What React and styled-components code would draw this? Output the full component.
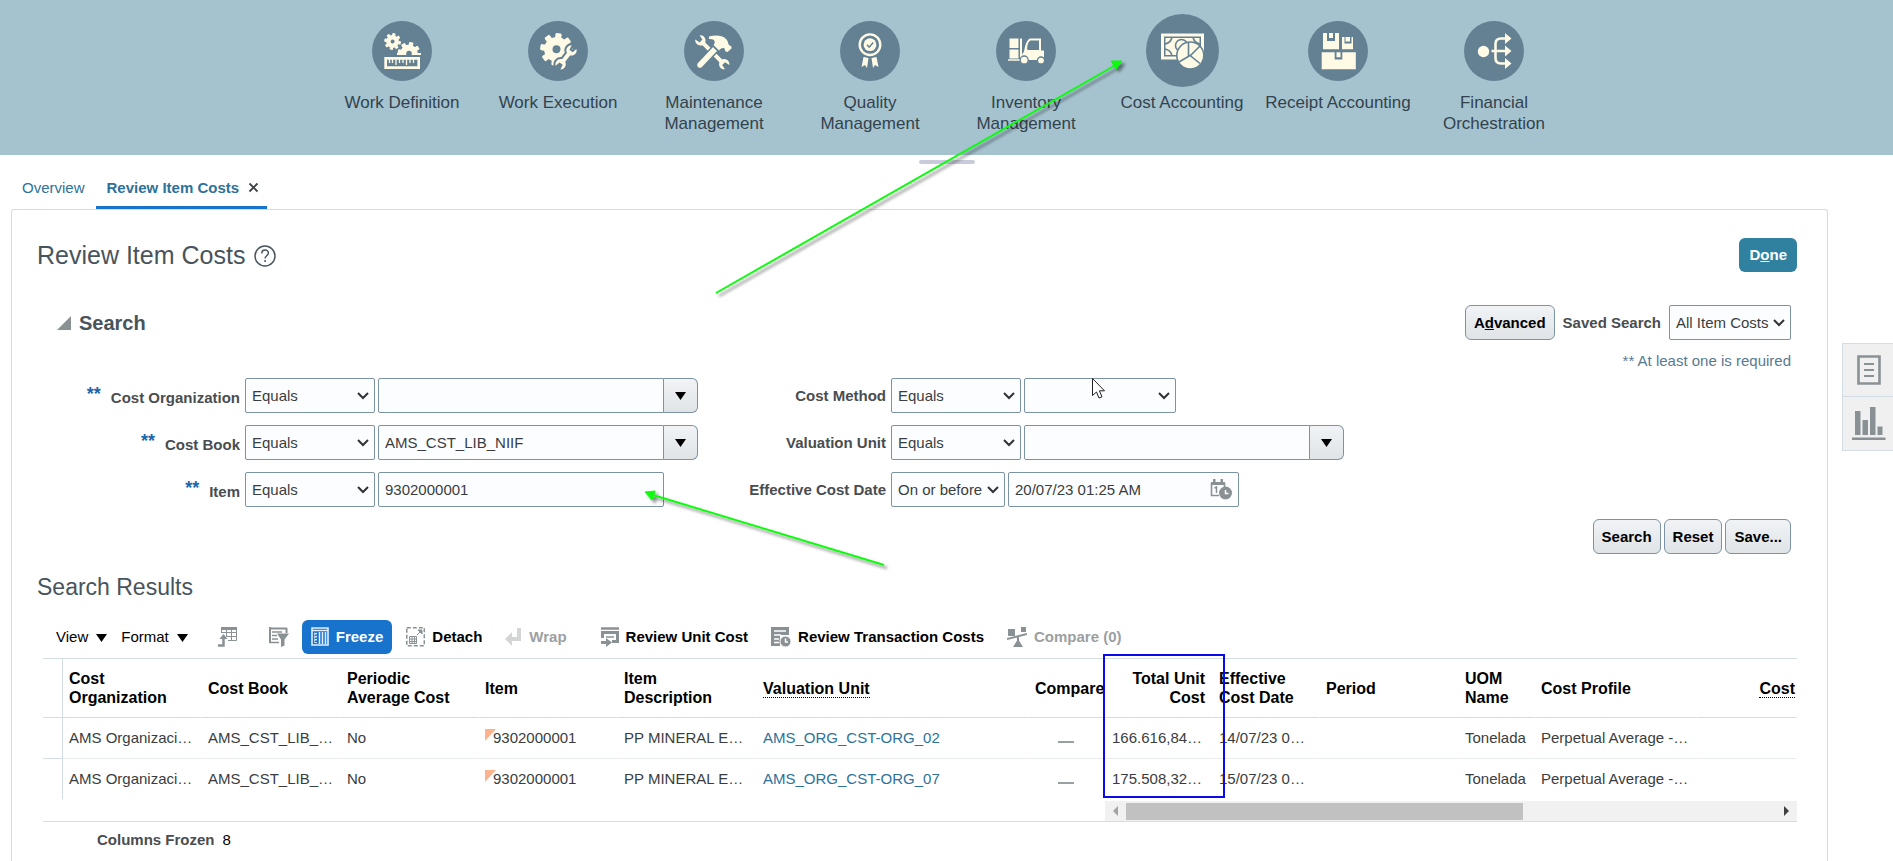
import React from "react"
import styled, { createGlobalStyle, css } from "styled-components"

const colors = {
  header: "#a5c3cf",
  disc: "#638193",
  cream: "#fefae6",
  link: "#2d7299",
  blue: "#1873cc",
  line: "#d3dde5",
  field: "#7b93a3",
  text: "#3a3d40",
  title: "#48545b",
  label: "#4a4d50",
  icon: "#8a9195",
}

const GlobalStyle = createGlobalStyle`
  *, *::before, *::after {
    box-sizing: border-box;
  }
  body {
    margin: 0;
    background: #fff;
    color: ${colors.text};
    font-family: "Liberation Sans", Arial, sans-serif;
    font-size: 15px;
    line-height: 18px;
  }
  button, input, select {
    font: inherit;
    margin: 0;
  }
`

const Page = styled.div`
  position: relative;
  display: flex;
  flex-direction: column;
  min-height: 100vh;
  overflow: hidden;
`
const Springboard = styled.nav`
  display: flex;
  justify-content: center;
  min-height: 155px;
  padding: 14px 0 0 3px;
  background: ${colors.header};
`
const AppLink = styled.a`
  display: flex;
  flex-direction: column;
  align-items: center;
  width: 156px;
  color: #33424d;
  font-size: 17px;
  line-height: 21px;
  text-align: center;
  text-decoration: none;
`
const AppIcon = styled.span`
  display: flex;
  align-items: center;
  justify-content: center;
  height: 73px;
  margin-bottom: 5px;
  svg {
    display: block;
    border-radius: 50%;
    background: ${colors.disc};
  }
  svg svg {
    border-radius: 0;
    background: none;
  }
`
const AppName = styled.span`
  width: ${props => (props.$wrap ? "112px" : "auto")};
  white-space: ${props => (props.$wrap ? "normal" : "nowrap")};
`
const Handle = styled.div`
  width: 56px;
  height: 4px;
  margin: 5px auto 0;
  border-radius: 2px;
  background: #c9cbda;
`
const Body = styled.div`
  display: flex;
  flex: 1;
  gap: 14px;
  padding-left: 11px;
`
const Main = styled.main`
  display: flex;
  flex: 1;
  flex-direction: column;
  min-width: 0;
`
const Tabs = styled.div`
  display: flex;
  height: 45px;
`
const Tab = styled.div`
  display: flex;
  align-items: center;
  gap: 9px;
  padding: ${props => (props.$active ? "5px 8px 0 11px" : "5px 11px 0 11px")};
  border-bottom: 3px solid ${props => (props.$active ? colors.blue : "transparent")};
  font-weight: ${props => (props.$active ? "bold" : "normal")};
  a {
    color: ${colors.link};
    text-decoration: none;
  }
`
const CloseButton = styled.button`
  display: flex;
  padding: 0;
  border: none;
  background: none;
`
const Panel = styled.section`
  flex: 1;
  padding: 28px 30px 0 25px;
  border: 1px solid ${colors.line};
  border-bottom: none;
  border-radius: 3px 3px 0 0;
`
const TitleRow = styled.div`
  display: flex;
  align-items: center;
  height: 34px;
  margin-bottom: 33px;
`
const Title = styled.h1`
  margin: 0 8px 0 0;
  color: ${colors.title};
  font-size: 25px;
  font-weight: normal;
  line-height: 30px;
`
const HelpButton = styled(CloseButton)`
  margin-right: auto;
`
const Button = styled.button`
  height: 35px;
  padding: 0 8px;
  border: 1px solid ${colors.field};
  border-radius: 6px;
  background: linear-gradient(#f1f3f5, #e0e4e7);
  color: #000;
  font-weight: bold;
  ${props =>
    props.$primary &&
    css`
      height: 34px;
      padding: 0 10px;
      border: none;
      background: #2f819f;
      color: #fff;
    `}
`
const SearchHeader = styled.div`
  display: flex;
  align-items: center;
  gap: 8px;
  padding: 0 6px 0 20px;
`
const Disclosure = styled.button`
  display: flex;
  align-items: center;
  gap: 8px;
  margin-right: auto;
  padding: 0;
  border: none;
  background: none;
  color: ${colors.title};
  font-size: 20px;
  font-weight: bold;
`
const Note = styled.p`
  margin: 12px 6px 8px 0;
  color: #587a91;
  text-align: right;
`
const Fields = styled.div`
  display: flex;
`
const FieldColumn = styled.div`
  display: flex;
  flex-direction: column;
  gap: 12px;
  width: ${props => props.$width};
`
const Field = styled.div`
  display: flex;
  align-items: center;
  gap: 3px;
  height: 35px;
`
const Label = styled.label`
  width: ${props => props.$width || "auto"};
  margin-right: ${props => (props.$width ? "2px" : "0")};
  color: ${colors.label};
  font-weight: bold;
  text-align: right;
  white-space: nowrap;
`
const Stars = styled.span`
  margin-right: 10px;
  color: #1b66ad;
  font-size: 18px;
  vertical-align: 3px;
`
const control = css`
  height: 35px;
  border: 1px solid ${colors.field};
  border-radius: 2px;
  background: #fcfdff;
  color: ${colors.text};
`
const SelectBox = styled.span`
  position: relative;
  display: flex;
  width: ${props => props.$width};
  svg {
    position: absolute;
    top: 14px;
    right: 6px;
    pointer-events: none;
  }
`
const NativeSelect = styled.select`
  ${control}
  width: 100%;
  padding: 0 6px;
  appearance: none;
`
const Input = styled.input`
  ${control}
  width: 286px;
  padding: 0 6px;
`
const Combo = styled.div`
  display: flex;
  ${Input} {
    border-radius: 2px 0 0 2px;
  }
`
const DropButton = styled.button`
  display: flex;
  align-items: center;
  justify-content: center;
  width: 34px;
  height: 35px;
  padding: 0;
  border: 1px solid ${colors.field};
  border-left: none;
  border-radius: 0 6px 6px 0;
  background: linear-gradient(#f1f3f5, #e0e4e7);
`
const DateBox = styled.div`
  ${control}
  display: flex;
  align-items: center;
  width: 231px;
  padding-right: 6px;
  ${Input} {
    flex: 1;
    min-width: 0;
    height: 33px;
    border: none;
  }
`
const Actions = styled.div`
  display: flex;
  justify-content: flex-end;
  gap: 3px;
  margin: 12px 6px 19px 0;
`
const Subtitle = styled.h2`
  margin: 0 0 19px;
  color: ${colors.title};
  font-size: 23px;
  font-weight: normal;
  line-height: 28px;
`
const Toolbar = styled.div`
  display: flex;
  gap: 11px;
  padding-left: 19px;
`
const ToolGroup = styled.div`
  display: flex;
  gap: ${props => props.$gap || "5px"};
  padding-left: ${props => props.$lead || "0"};
`
const MenuButton = styled.button`
  display: flex;
  align-items: center;
  gap: 8px;
  padding: 0;
  border: none;
  background: none;
  color: #000;
`
const ToolButton = styled.button`
  display: flex;
  align-items: center;
  gap: 7px;
  height: 34px;
  padding: ${props => (props.$iconOnly ? "0 8px 0 19px" : "0 9px")};
  border: none;
  border-radius: 6px;
  background: ${props => (props.$active ? colors.blue : "none")};
  color: ${props => (props.$active ? "#fff" : "#000")};
  font-weight: bold;
  white-space: nowrap;
  &:disabled {
    color: #9c9fa1;
  }
`
const Results = styled.div`
  position: relative;
  margin: 4px 0 0 6px;
  border-bottom: 1px solid ${colors.line};
`
const Table = styled.table`
  width: 100%;
  border-top: 1px solid ${colors.line};
  border-spacing: 0;
  table-layout: fixed;
`
const HeadCell = styled.th`
  height: 59px;
  padding: 0 ${props => (props.$edge ? "1px" : "7px")} 0 6px;
  border-right: 1px solid ${props => (props.$rule ? colors.line : "#fff")};
  border-bottom: 1px solid ${colors.line};
  overflow: hidden;
  color: #000;
  font-size: 16px;
  line-height: 19px;
  text-align: ${props => props.$align || "left"};
  abbr {
    border-bottom: 1px dotted #000;
    text-decoration: none;
  }
`
const Cell = styled.td`
  height: 41px;
  padding: 0 0 0 6px;
  border-right: 1px solid ${props => (props.$rule ? colors.line : "#fff")};
  border-bottom: 1px solid ${props => (props.$rule ? colors.line : "#e9ecee")};
  overflow: hidden;
  text-align: ${props => props.$align || "left"};
  white-space: nowrap;
  a {
    color: ${colors.link};
    text-decoration: none;
  }
  tr:last-child > & {
    border-bottom-color: transparent;
  }
`
const ItemValue = styled.span`
  display: flex;
  svg {
    margin-right: -3px;
  }
`
const Dash = styled.span`
  display: inline-block;
  width: 16px;
  height: 2px;
  margin-right: 8px;
  background: #9a9fa2;
`
const ScrollRow = styled.div`
  display: flex;
  padding-top: 1px;
`
const FrozenSpace = styled.div`
  width: 1062px;
`
const ScrollBar = styled.div`
  display: flex;
  flex: 1;
  align-items: center;
  height: 20px;
  background: #f1f1f1;
`
const ScrollButton = styled.button`
  display: flex;
  align-items: center;
  justify-content: center;
  width: 21px;
  height: 20px;
  padding: 0;
  border: none;
  background: none;
`
const Track = styled.div`
  flex: 1;
`
const Thumb = styled.div`
  width: 61%;
  height: 17px;
  background: #c1c1c1;
`
const Frozen = styled.p`
  display: flex;
  gap: 8px;
  margin: 9px 0 0 60px;
  color: #000;
  b {
    color: ${colors.label};
  }
`
const SideRail = styled.aside`
  width: 51px;
  padding-top: 179px;
`
const RailButton = styled.button`
  display: flex;
  align-items: center;
  justify-content: center;
  width: 51px;
  height: 54px;
  padding: 0 0 0 2px;
  border: 1px solid ${colors.line};
  border-right: none;
  background: #f0f0f0;
  & + & {
    border-top: none;
  }
`
const Highlight = styled.div`
  position: absolute;
  top: -4px;
  left: 1060px;
  width: 122px;
  height: 144px;
  border: 2px solid #0a0af0;
`
const Annotations = styled.svg`
  position: absolute;
  top: 0;
  left: 0;
  pointer-events: none;
`

const Gear = ({ x, y, r, hole, teeth = 8, turn = 0 }) => {
  const body = r * 0.76
  return (
    <g transform={`translate(${x} ${y}) rotate(${turn})`}>
      <circle r={(body + hole) / 2} fill="none" stroke={colors.cream} strokeWidth={body - hole} />
      {Array.from({ length: teeth }, (_, i) => (
        <rect
          key={i}
          x={-r * 0.19}
          y={-r}
          width={r * 0.38}
          height={r * 0.35}
          rx={r * 0.08}
          fill={colors.cream}
          transform={`rotate(${(i * 360) / teeth})`}
        />
      ))}
    </g>
  )
}

const WrenchShape = ({ length }) => (
  <path
    d={`M-2 4 L-2 ${length - 4} C-6 ${length - 2} -6 ${length + 3} -3 ${length + 5} L-2 ${length} L2 ${length} L3 ${length + 5}
      C6 ${length + 3} 6 ${length - 2} 2 ${length - 4} L2 4 C6 2 6 -3 3 -5 L2 0 L-2 0 L-3 -5 C-6 -3 -6 2 -2 4Z`}
  />
)

const WorkDefinitionIcon = () => (
  <svg width="60" height="60" viewBox="0 0 60 60" fill={colors.cream}>
    <Gear x={20.6} y={20.5} r={8.4} hole={2} turn={10} />
    <svg x="24" y="18" width="25" height="16" viewBox="24 18 25 16">
      <Gear x={37} y={32.5} r={11.4} hole={2.8} turn={12} />
      <path d="M25 32h6v2h-6zM43 32h6v2h-6z" />
    </svg>
    <path d="M12.3 36H48v12H12.3zM15 38.7v6.6h30.4v-6.6z" fillRule="evenodd" />
    <path d="M17.5 38v4M20.5 38v4M24 38v6M27.500 38v4M31 38v4M34.500 38v6M38 38v4M41.500 38v4" stroke={colors.cream} strokeWidth="1.3" />
  </svg>
)
const WorkExecutionIcon = () => (
  <svg width="60" height="60" viewBox="0 0 60 60" fill={colors.cream}>
    <Gear x={28.5} y={28.3} r={16.3} hole={4} turn={8} />
    <g transform="translate(43 30) rotate(38)" stroke={colors.disc} strokeWidth="4" strokeLinejoin="round">
      <WrenchShape length={16} />
    </g>
    <g transform="translate(43 30) rotate(38)">
      <WrenchShape length={16} />
    </g>
  </svg>
)
const MaintenanceIcon = () => (
  <svg width="60" height="60" viewBox="0 0 60 60" fill={colors.cream}>
    <g transform="translate(17 20) rotate(-45)">
      <WrenchShape length={32} />
    </g>
    <path d="M13 42l16-17 5 5-16 17q-2.500 1.500-4.500-.5t-.5-4.500z" stroke={colors.disc} strokeWidth="1.500" />
    <path d="M25 15.500c6-1.500 13-1.500 17 2.500 2.500 2.500 2 5 3 6l2.500 1.500v2l-4 3.500-2-.5-1-3c-2-1-4 0-5.500 2l-5.500-5.500c2.500-3 1.500-6.500-4.500-6z" />
  </svg>
)
const QualityIcon = () => (
  <svg width="60" height="60" viewBox="0 0 60 60" fill={colors.cream}>
    <circle cx="30" cy="23.700" r="10.300" fill="none" stroke={colors.cream} strokeWidth="2.400" />
    <circle cx="30" cy="23.700" r="6.400" />
    <path d="M27 23.800l2.200 2.400 4-4.600" fill="none" stroke={colors.disc} strokeWidth="1.500" />
    <path d="M23.500 36l5 1-1.500 10-2-3-3.500 2zM36.500 36l-5 1 1.500 10 2-3 3.500 2z" />
  </svg>
)
const InventoryIcon = () => (
  <svg width="60" height="60" viewBox="0 0 60 60" fill={colors.cream}>
    <path d="M13.500 17.500h9v9.500h-9zM13.500 28.500h9v9h-9zM12 38.300h13v1.500H12zM24 17.500h2v21h-2z" />
    <path d="M27 32c2-1.500 1-8 5-13 1-1.200 2-1.500 3-1.500h10v12h3v9.500H26v-5zM34.500 19.500c-3 1.500-3 6-3.500 9l2 .5h10v-9.500z" fillRule="evenodd" />
    <circle cx="28.200" cy="39" r="4" stroke={colors.disc} strokeWidth="1.300" />
    <circle cx="45" cy="39.500" r="3.500" stroke={colors.disc} strokeWidth="1.300" />
  </svg>
)
const CostIcon = () => (
  <svg width="73" height="73" viewBox="0 0 73 73" fill={colors.cream}>
    <path d="M15 19.500h43v26H15zM18 22.500v20h37v-20z" fillRule="evenodd" />
    <path d="M19.500 24h34v17h-34z" />
    <g fill="none" stroke={colors.disc}>
      <path d="M19 30q6-1 7-7M19 35q6 1 7 7M54 30q-6-1-7-7" strokeWidth="1.600" />
      <circle cx="35.500" cy="31.500" r="6" strokeWidth="1.600" />
    </g>
    <circle cx="44.300" cy="41.500" r="13.500" stroke={colors.disc} strokeWidth="1.600" />
    <path d="M42.500 28v14M44 42l10-10M33 48l11-6.500 10 8" fill="none" stroke={colors.disc} strokeWidth="1.600" />
  </svg>
)
const ReceiptIcon = () => (
  <svg width="60" height="60" viewBox="0 0 60 60" fill={colors.cream}>
    <path d="M15 12h4v8h8v-8h4v16.300H15zM21 12h4v5h-4zM34 16h2.500v6.500h7V16H45v12.300H34zM37.500 16h4.500v4.500h-4.500zM13.700 31.300h13v7.200h7.600v-7.200h13.500v17H13.700zM28.500 31.300h4v5h-4z" />
  </svg>
)
const FinancialIcon = () => (
  <svg width="60" height="60" viewBox="0 0 60 60" fill={colors.cream}>
    <circle cx="19.500" cy="30.500" r="5.700" />
    <path d="M27.500 30H43M43 17.500h-6q-5.500 0-5.500 5.500v14q0 5.500 5.500 5.500h6" fill="none" stroke={colors.cream} strokeWidth="2.600" />
    <path d="M41 12l6.500 5.500-6.500 5.500zM41 24.500l6.500 5.500-6.500 5.500zM41 37l6.500 5.500-6.500 5.500z" />
  </svg>
)

const Caret = () => (
  <svg width="11" height="9" viewBox="0 0 11 9" aria-hidden="true">
    <path d="M0 1h11L5.500 9z" fill="#000" />
  </svg>
)
const ToolIcon = ({ width = 19, children }) => (
  <svg width={width} height="20" viewBox={`0 0 ${width} 20`} fill="none" stroke={colors.icon} strokeWidth="1" aria-hidden="true">
    {children}
  </svg>
)
const ExportIcon = () => (
  <ToolIcon>
    <path d="M3.500 6V.5h15v13H10M3.500 5.500h15M8 9.500h10.500M8.500 1v9M13.500 1v13" />
    <path d="M3 0h16v3H3z" fill={colors.icon} stroke="none" />
    <path d="M0 18.500h5.500V11" strokeWidth="2.500" />
    <path d="M1.500 12l4-5 4 5z" fill={colors.icon} stroke="none" />
  </ToolIcon>
)
const FilterIcon = () => (
  <ToolIcon width={20}>
    <path d="M0 1.500h18M1 0v16M17.500 1v5" strokeWidth="2" />
    <path d="M3 5h10M3 8.500h5M3 12h6M0 15.500h10" strokeWidth="1.500" />
    <path d="M8 6.500h12l-4.500 6v6L12 20v-7.500z" fill={colors.icon} stroke="none" />
  </ToolIcon>
)
const FreezeIcon = () => (
  <ToolIcon width={18}>
    <g stroke="#e4eefb">
      <path d="M1 1h16v17H1z" strokeWidth="1.600" />
      <path d="M1 3.500h16" strokeWidth="1.500" />
      <path d="M8.500 5v12M11.500 5v12M14.500 5v12" strokeWidth="1.500" />
      <path d="M3 6l3 1M3 9l3 1M3 12l3 1M3 15l3 1M3 8l3-2M3 11l3-2M3 14l3-2" />
    </g>
  </ToolIcon>
)
const DetachIcon = () => (
  <ToolIcon>
    <path d="M.8.8h17.500v18H.8z" strokeWidth="1.500" strokeDasharray="4 2" />
    <path d="M3.500 9.500h7v7h-7zM3.500 12h7M3.500 14.500h7M6 9.500v7M8.500 9.500v7M11 8l4-4" />
    <path d="M12 3h4v4z" fill={colors.icon} />
  </ToolIcon>
)
const WrapIcon = () => (
  <ToolIcon width={17}>
    <path d="M14 1v11H6" stroke="#d3d5d7" strokeWidth="4" />
    <path d="M0 12l7-7v14z" fill="#d3d5d7" stroke="none" />
  </ToolIcon>
)
const UnitCostIcon = () => (
  <ToolIcon width={18}>
    <path d="M0 1.500h18" strokeWidth="2.500" />
    <path d="M1.500 11V5.500h15v9H11" strokeWidth="3" />
    <path d="M5 10h8" strokeWidth="1.500" />
    <path d="M0 15.500h6" strokeWidth="3" />
    <path d="M5 11l6 4.500-6 4.500z" fill={colors.icon} stroke="none" />
  </ToolIcon>
)
const TransactionIcon = () => (
  <ToolIcon width={20}>
    <path d="M0 0h18v8H9v11H0z" fill={colors.icon} stroke="none" />
    <path d="M3 4h12M3 8h7M3 12h5M3 15.500h5" stroke="#fff" strokeWidth="1.500" />
    <circle cx="14.500" cy="14.500" r="5.500" fill={colors.icon} stroke="#fff" />
    <path d="M14.500 11.500v3.500H17" stroke="#fff" strokeWidth="1.500" />
  </ToolIcon>
)
const CompareIcon = () => (
  <ToolIcon width={20}>
    <path d="M1 2h7v7H1zM14 0h5v5h-5zM11 12l5 8H6z" fill={colors.icon} stroke="none" />
    <path d="M0 12l20-5M11 9v6" strokeWidth="2" />
  </ToolIcon>
)
const CalendarIcon = () => (
  <svg width="22" height="21" viewBox="0 0 22 21" fill="none" aria-hidden="true">
    <path d="M1.500 4v12.500H9M14.500 8V4" stroke={colors.icon} strokeWidth="1.600" />
    <path d="M1 3h14v3H1zM3 0h2.500v3H3zM10.500 0H13v3h-2.500z" fill={colors.icon} />
    <path d="M4.500 9l2-1v6" stroke={colors.icon} strokeWidth="1.500" />
    <circle cx="15.500" cy="14" r="6.500" fill={colors.icon} />
    <path d="M15.500 11v3.500h3" stroke="#fff" strokeWidth="1.500" />
  </svg>
)

const apps = [
  { name: "Work Definition", Icon: WorkDefinitionIcon },
  { name: "Work Execution", Icon: WorkExecutionIcon },
  { name: "Maintenance Management", Icon: MaintenanceIcon, wrap: true },
  { name: "Quality Management", Icon: QualityIcon, wrap: true },
  { name: "Inventory Management", Icon: InventoryIcon, wrap: true },
  { name: "Cost Accounting", Icon: CostIcon },
  { name: "Receipt Accounting", Icon: ReceiptIcon },
  { name: "Financial Orchestration", Icon: FinancialIcon, wrap: true },
]

const columnWidths = [20, 139, 139, 138, 139, 139, 272, 77, 107, 107, 139, 76, 162]

const rows = [
  { unit: "AMS_ORG_CST-ORG_02", cost: "166.616,84…", date: "14/07/23 0…" },
  { unit: "AMS_ORG_CST-ORG_07", cost: "175.508,32…", date: "15/07/23 0…" },
]

const Select = ({ width, ...rest }) => (
  <SelectBox $width={width}>
    <NativeSelect {...rest} />
    <svg width="12" height="8" viewBox="0 0 12 8" fill="none" aria-hidden="true">
      <path d="M1 1l5 5 5-5" stroke="#303336" strokeWidth="2" />
    </svg>
  </SelectBox>
)

const Operator = ({ label, value = "Equals", width = "130px" }) => (
  <Select width={width} aria-label={`${label} operator`} defaultValue={value}>
    <option>{value}</option>
  </Select>
)

const ComboBox = ({ id, value }) => (
  <Combo>
    <Input id={id} defaultValue={value} />
    <DropButton type="button" aria-label="Open list">
      <Caret />
    </DropButton>
  </Combo>
)

const SearchForm = () => (
  <Fields>
    <FieldColumn $width="661px">
      <Field>
        <Label $width="203px" htmlFor="organization">
          <Stars>**</Stars>Cost Organization
        </Label>
        <Operator label="Cost Organization" />
        <ComboBox id="organization" />
      </Field>
      <Field>
        <Label $width="203px" htmlFor="book">
          <Stars>**</Stars>Cost Book
        </Label>
        <Operator label="Cost Book" />
        <ComboBox id="book" value="AMS_CST_LIB_NIIF" />
      </Field>
      <Field>
        <Label $width="203px" htmlFor="item">
          <Stars>**</Stars>Item
        </Label>
        <Operator label="Item" />
        <Input id="item" defaultValue="9302000001" />
      </Field>
    </FieldColumn>
    <FieldColumn>
      <Field>
        <Label $width="188px" htmlFor="method">
          Cost Method
        </Label>
        <Operator label="Cost Method" />
        <Select id="method" width="152px" />
      </Field>
      <Field>
        <Label $width="188px" htmlFor="valuation">
          Valuation Unit
        </Label>
        <Operator label="Valuation Unit" />
        <ComboBox id="valuation" />
      </Field>
      <Field>
        <Label $width="188px" htmlFor="date">
          Effective Cost Date
        </Label>
        <Operator label="Effective Cost Date" value="On or before" width="114px" />
        <DateBox>
          <Input id="date" defaultValue="20/07/23 01:25 AM" />
          <CloseButton type="button" aria-label="Select date and time">
            <CalendarIcon />
          </CloseButton>
        </DateBox>
      </Field>
    </FieldColumn>
  </Fields>
)

const ResultsTable = () => (
  <Table>
    <colgroup>
      {columnWidths.map((width, i) => (
        <col key={i} width={width} />
      ))}
      <col />
    </colgroup>
    <thead>
      <tr>
        <HeadCell $rule />
        <HeadCell>Cost Organization</HeadCell>
        <HeadCell>Cost Book</HeadCell>
        <HeadCell>Periodic Average Cost</HeadCell>
        <HeadCell>Item</HeadCell>
        <HeadCell>
          Item
          <br />
          Description
        </HeadCell>
        <HeadCell>
          <abbr>Valuation Unit</abbr>
        </HeadCell>
        <HeadCell $edge>Compare</HeadCell>
        <HeadCell $align="right">Total Unit Cost</HeadCell>
        <HeadCell>Effective Cost Date</HeadCell>
        <HeadCell>Period</HeadCell>
        <HeadCell>UOM Name</HeadCell>
        <HeadCell>Cost Profile</HeadCell>
        <HeadCell $edge $align="right">
          <abbr>Cost</abbr>
        </HeadCell>
      </tr>
    </thead>
    <tbody>
      {rows.map(row => (
        <tr key={row.unit}>
          <Cell $rule />
          <Cell>AMS Organizaci…</Cell>
          <Cell>AMS_CST_LIB_…</Cell>
          <Cell>No</Cell>
          <Cell>
            <ItemValue>
              <svg width="11" height="12" viewBox="0 0 11 12" aria-hidden="true">
                <path d="M0 0h11L0 12z" fill="#ffb38c" />
              </svg>
              9302000001
            </ItemValue>
          </Cell>
          <Cell>PP MINERAL E…</Cell>
          <Cell>
            <a href="#unit">{row.unit}</a>
          </Cell>
          <Cell $align="center">
            <Dash />
          </Cell>
          <Cell>{row.cost}</Cell>
          <Cell>{row.date}</Cell>
          <Cell />
          <Cell>Tonelada</Cell>
          <Cell>Perpetual Average -…</Cell>
          <Cell />
        </tr>
      ))}
    </tbody>
  </Table>
)

const App = () => {
  return (
    <Page>
      <GlobalStyle />
      <Springboard>
        {apps.map(({ name, Icon, wrap }) => (
          <AppLink key={name} href="#app">
            <AppIcon>
              <Icon />
            </AppIcon>
            <AppName $wrap={wrap}>{name}</AppName>
          </AppLink>
        ))}
      </Springboard>
      <Handle />
      <Body>
        <Main>
          <Tabs>
            <Tab>
              <a href="#overview">Overview</a>
            </Tab>
            <Tab $active>
              <a href="#costs">Review Item Costs</a>
              <CloseButton type="button" aria-label="Close tab">
                <svg width="11" height="11" viewBox="0 0 11 11">
                  <path d="M1.500 1.500l8 8M9.500 1.500l-8 8" stroke="#3d4347" strokeWidth="1.800" />
                </svg>
              </CloseButton>
            </Tab>
          </Tabs>
          <Panel>
            <TitleRow>
              <Title>Review Item Costs</Title>
              <HelpButton type="button" aria-label="Help">
                <svg width="24" height="24" viewBox="0 0 24 24" fill="none" stroke={colors.title} strokeWidth="1.500">
                  <circle cx="12" cy="13" r="10" />
                  <path d="M8.800 10.500c0-4.500 6.600-4.500 6.600-.5 0 2.500-3.300 2.500-3.300 5.500M12.100 17v2" />
                </svg>
              </HelpButton>
              <Button $primary type="button">
                D<u>o</u>ne
              </Button>
            </TitleRow>
            <SearchHeader>
              <Disclosure type="button">
                <svg width="14" height="14" viewBox="0 0 14 14" aria-hidden="true">
                  <path d="M14 0v14H0z" fill={colors.icon} />
                </svg>
                Search
              </Disclosure>
              <Button type="button">
                A<u>d</u>vanced
              </Button>
              <Label htmlFor="saved">Saved Search</Label>
              <Select id="saved" width="122px">
                <option>All Item Costs</option>
              </Select>
            </SearchHeader>
            <Note>** At least one is required</Note>
            <SearchForm />
            <Actions>
              <Button type="button">Search</Button>
              <Button type="button">Reset</Button>
              <Button type="button">Save...</Button>
            </Actions>
            <Subtitle>Search Results</Subtitle>
            <Toolbar>
              <ToolGroup $gap="14px">
                <MenuButton type="button">
                  View <Caret />
                </MenuButton>
                <MenuButton type="button">
                  Format <Caret />
                </MenuButton>
              </ToolGroup>
              <ToolGroup>
                <ToolButton $iconOnly type="button" aria-label="Export">
                  <ExportIcon />
                </ToolButton>
                <ToolButton $iconOnly type="button" aria-label="Query by example">
                  <FilterIcon />
                </ToolButton>
                <ToolButton $active type="button">
                  <FreezeIcon />
                  Freeze
                </ToolButton>
                <ToolButton type="button">
                  <DetachIcon />
                  Detach
                </ToolButton>
                <ToolButton disabled type="button">
                  <WrapIcon />
                  Wrap
                </ToolButton>
              </ToolGroup>
              <ToolGroup $lead="5px">
                <ToolButton type="button">
                  <UnitCostIcon />
                  Review Unit Cost
                </ToolButton>
                <ToolButton type="button">
                  <TransactionIcon />
                  Review Transaction Costs
                </ToolButton>
                <ToolButton disabled type="button">
                  <CompareIcon />
                  Compare (0)
                </ToolButton>
              </ToolGroup>
            </Toolbar>
            <Results>
              <ResultsTable />
              <ScrollRow>
                <FrozenSpace />
                <ScrollBar>
                  <ScrollButton type="button" aria-label="Scroll left">
                    <svg width="5" height="10" viewBox="0 0 5 10">
                      <path d="M5 0v10L0 5z" fill="#a3a3a3" />
                    </svg>
                  </ScrollButton>
                  <Track>
                    <Thumb />
                  </Track>
                  <ScrollButton type="button" aria-label="Scroll right">
                    <svg width="5" height="10" viewBox="0 0 5 10">
                      <path d="M0 0v10l5-5z" fill="#404040" />
                    </svg>
                  </ScrollButton>
                </ScrollBar>
              </ScrollRow>
              <Highlight />
            </Results>
            <Frozen>
              <b>Columns Frozen</b> 8
            </Frozen>
          </Panel>
        </Main>
        <SideRail>
          <RailButton type="button" aria-label="Notes">
            <svg width="24" height="30" viewBox="0 0 24 30" fill="none" stroke={colors.icon}>
              <path d="M1.500 1.500h21v27h-21z" strokeWidth="2.600" />
              <path d="M7 9h10M7 15h10M7 21h10" strokeWidth="2.200" />
            </svg>
          </RailButton>
          <RailButton type="button" aria-label="Analytics">
            <svg width="34" height="34" viewBox="0 0 34 34" fill={colors.icon}>
              <path d="M3 4h5.500v24H3zM10.500 13H16v15h-5.500zM18 0h5.500v28H18zM25.500 19.500h5V28h-5zM0 30.500h33.500V33H0z" />
            </svg>
          </RailButton>
        </SideRail>
      </Body>
      <Annotations width="1200" height="600" viewBox="0 0 1200 600" aria-hidden="true">
        <g stroke="#0dfb0d" strokeWidth="2" fill="#0dfb0d" filter="url(#arrowShadow)">
          <path d="M716 293L1114 66" />
          <path d="M1122 61l-6 8-5-8z" strokeWidth="1" />
          <path d="M884 565L653 495" />
          <path d="M645 492l10-1-3 9z" strokeWidth="1" />
        </g>
        <defs>
          <filter id="arrowShadow">
            <feDropShadow dx="3" dy="3" stdDeviation="1.5" floodColor="#000" floodOpacity="0.45" />
          </filter>
        </defs>
        <path d="M1092.500 378.500v17l4-3.500 2.500 6 3-1.200-2.600-6h5.100z" fill="#fff" stroke="#222" />
      </Annotations>
    </Page>
  )
}

export default App
